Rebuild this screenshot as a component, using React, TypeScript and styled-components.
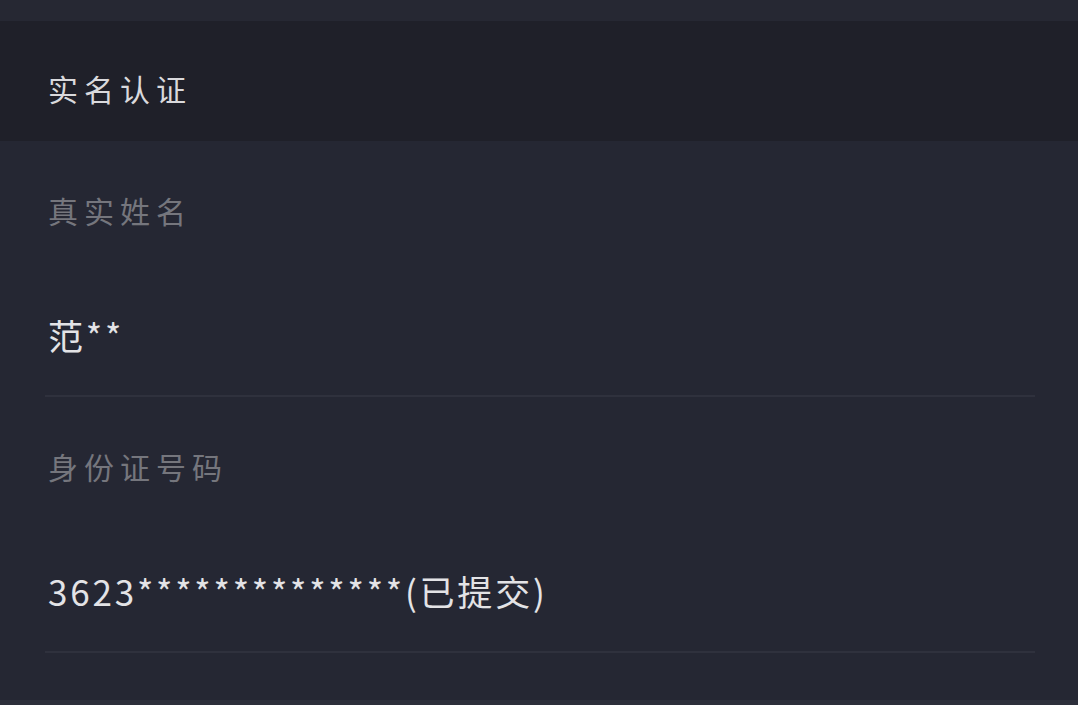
import styled, { createGlobalStyle } from 'styled-components'

const GlobalStyle = createGlobalStyle`
  html, body {
    margin: 0;
    padding: 0;
    background: #252733;
  }
  body {
    font-family: "Noto Sans CJK SC", "Noto Sans", sans-serif;
  }
`

const Page = styled.div`
  width: 1078px;
  height: 705px;
  display: flex;
  flex-direction: column;
  background: #252733;
  overflow: hidden;
`

const TopStrip = styled.div`
  height: 21px;
  background: #262833;
`

const SectionHeader = styled.div`
  height: 120px;
  box-sizing: border-box;
  display: flex;
  align-items: center;
  padding: 14px 0 0 48px;
  background: #1f2029;
`

const HeaderTitle = styled.h2`
  margin: 0;
  font-size: 30px;
  font-weight: 400;
  line-height: 1;
  letter-spacing: 6px;
  color: #d9d9dc;
`

const FieldList = styled.div`
  flex: 1;
  display: flex;
  flex-direction: column;
`

const Field = styled.div`
  margin: 0 43px 0 45px;
  padding: 54px 0 40px 3px;
  border-bottom: 2px solid #2f313d;
`

const FieldLabel = styled.div`
  font-size: 30px;
  line-height: 30px;
  letter-spacing: 6px;
  color: #75767d;
`

const FieldValue = styled.div`
  margin-top: 90px;
  font-size: 35px;
  line-height: 40px;
  letter-spacing: 2.8px;
  color: #e3e3e6;
`

const BottomStrip = styled.div`
  height: 5px;
  margin-top: auto;
  background: #2d2f3b;
`

const fields = [
  { label: '真实姓名', value: '范**' },
  { label: '身份证号码', value: '3623**************(已提交)' },
]

function App() {
  return (
    <Page>
      <GlobalStyle />
      <TopStrip />
      <SectionHeader>
        <HeaderTitle>实名认证</HeaderTitle>
      </SectionHeader>
      <FieldList>
        {fields.map((f) => (
          <Field key={f.label}>
            <FieldLabel>{f.label}</FieldLabel>
            <FieldValue>{f.value}</FieldValue>
          </Field>
        ))}
        <BottomStrip />
      </FieldList>
    </Page>
  )
}

export default App
